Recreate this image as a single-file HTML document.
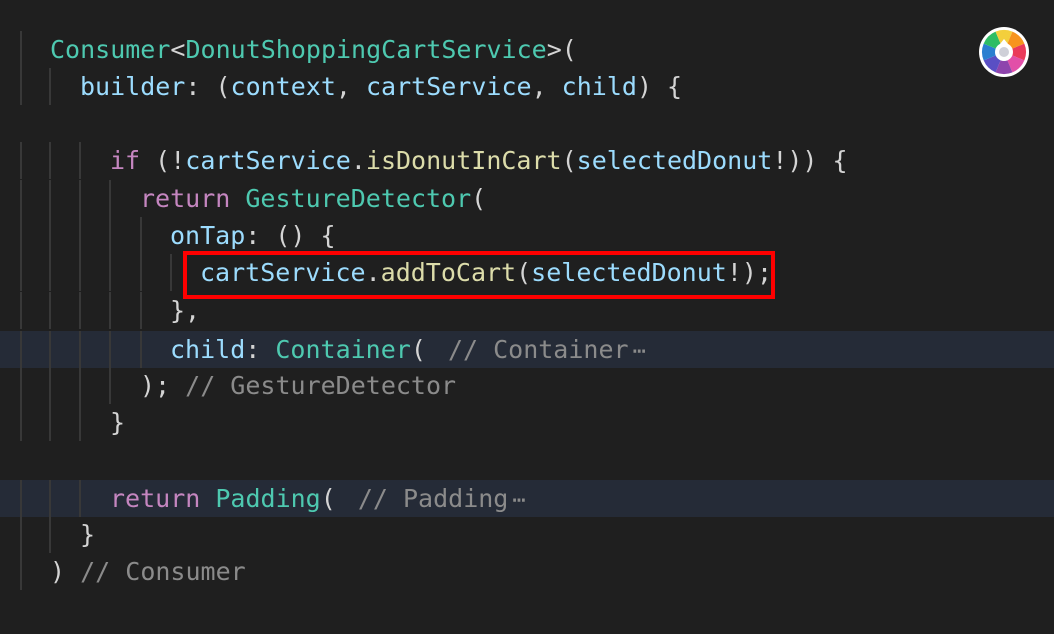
<!DOCTYPE html>
<html><head><meta charset="utf-8"><style>
body{margin:0;width:1054px;height:634px;background:#1f1f1f;overflow:hidden;position:relative;font-family:"DejaVu Sans Mono","Liberation Mono",monospace;font-size:25px;}
.l{position:absolute;left:0;width:1054px;height:37px;line-height:37px;white-space:pre;color:#d4d4d4}
.hl{background:#252b37}
.g{position:absolute;top:0;width:2px;height:37px;background:#383838}
.t{position:absolute;top:0}
.c{color:#4ec9b0}.v{color:#9cdcfe}.k{color:#c586c0}.f{color:#dcdcaa}.m{color:#8b8b8b}
.e{color:#8b8b8b;font-size:22px;margin-left:4px}
</style></head><body>
<div class="l" style="top:31px"><i class="g" style="left:20px"></i><span class="t" style="left:50px"><span class="c">Consumer</span>&lt;<span class="c">DonutShoppingCartService</span>&gt;(</span></div>
<div class="l" style="top:68px"><i class="g" style="left:20px"></i><i class="g" style="left:49px"></i><span class="t" style="left:80px"><span class="v">builder</span>: (<span class="v">context</span>, <span class="v">cartService</span>, <span class="v">child</span>) {</span></div>
<div class="l" style="top:142px"><i class="g" style="left:20px"></i><i class="g" style="left:49px"></i><i class="g" style="left:79px"></i><span class="t" style="left:110px"><span class="k">if</span> (!<span class="v">cartService</span>.<span class="f">isDonutInCart</span>(<span class="v">selectedDonut</span>!)) {</span></div>
<div class="l" style="top:180px"><i class="g" style="left:20px"></i><i class="g" style="left:49px"></i><i class="g" style="left:79px"></i><i class="g" style="left:109px"></i><span class="t" style="left:140px"><span class="k">return</span> <span class="c">GestureDetector</span>(</span></div>
<div class="l" style="top:217px"><i class="g" style="left:20px"></i><i class="g" style="left:49px"></i><i class="g" style="left:79px"></i><i class="g" style="left:109px"></i><i class="g" style="left:140px"></i><span class="t" style="left:170px"><span class="v">onTap</span>: () {</span></div>
<div class="l" style="top:254px"><i class="g" style="left:20px"></i><i class="g" style="left:49px"></i><i class="g" style="left:79px"></i><i class="g" style="left:109px"></i><i class="g" style="left:140px"></i><i class="g" style="left:170px"></i><span class="t" style="left:200px"><span class="v">cartService</span>.<span class="f">addToCart</span>(<span class="v">selectedDonut</span>!);</span></div>
<div class="l" style="top:292px"><i class="g" style="left:20px"></i><i class="g" style="left:49px"></i><i class="g" style="left:79px"></i><i class="g" style="left:109px"></i><i class="g" style="left:140px"></i><span class="t" style="left:170px">},</span></div>
<div class="l hl" style="top:331px"><i class="g" style="left:20px"></i><i class="g" style="left:49px"></i><i class="g" style="left:79px"></i><i class="g" style="left:109px"></i><i class="g" style="left:140px"></i><span class="t" style="left:170px"><span class="v">child</span>: <span class="c">Container</span>( <span class="m" style="margin-left:7px">// Container</span><span class="e">⋯</span></span></div>
<div class="l" style="top:367px"><i class="g" style="left:20px"></i><i class="g" style="left:49px"></i><i class="g" style="left:79px"></i><i class="g" style="left:109px"></i><span class="t" style="left:140px">); <span class="m">// GestureDetector</span></span></div>
<div class="l" style="top:404px"><i class="g" style="left:20px"></i><i class="g" style="left:49px"></i><i class="g" style="left:79px"></i><span class="t" style="left:110px">}</span></div>
<div class="l hl" style="top:480px"><i class="g" style="left:20px"></i><i class="g" style="left:49px"></i><i class="g" style="left:79px"></i><span class="t" style="left:110px"><span class="k">return</span> <span class="c">Padding</span>( <span class="m" style="margin-left:7px">// Padding</span><span class="e">⋯</span></span></div>
<div class="l" style="top:516px"><i class="g" style="left:20px"></i><i class="g" style="left:49px"></i><span class="t" style="left:80px">}</span></div>
<div class="l" style="top:553px"><i class="g" style="left:20px"></i><span class="t" style="left:50px">) <span class="m">// Consumer</span></span></div>
<div style="position:absolute;left:183px;top:251px;width:584px;height:40px;border:4px solid #ff0000"></div>
<svg style="position:absolute;left:978px;top:26px" width="52" height="52" viewBox="-26 -26 52 52">
<circle r="25" fill="#fff"/>
<g transform="rotate(-22.5)">
<path d="M0 0 L22 0 A22 22 0 0 1 15.56 15.56Z" fill="#ea3a5a"/>
<path d="M0 0 L22 0 A22 22 0 0 1 15.56 15.56Z" fill="#e24fa8" transform="rotate(45)"/>
<path d="M0 0 L22 0 A22 22 0 0 1 15.56 15.56Z" fill="#8e44ad" transform="rotate(90)"/>
<path d="M0 0 L22 0 A22 22 0 0 1 15.56 15.56Z" fill="#5a4fc4" transform="rotate(135)"/>
<path d="M0 0 L22 0 A22 22 0 0 1 15.56 15.56Z" fill="#2b7fd0" transform="rotate(180)"/>
<path d="M0 0 L22 0 A22 22 0 0 1 15.56 15.56Z" fill="#2ebd64" transform="rotate(225)"/>
<path d="M0 0 L22 0 A22 22 0 0 1 15.56 15.56Z" fill="#f3cf3c" transform="rotate(270)"/>
<path d="M0 0 L22 0 A22 22 0 0 1 15.56 15.56Z" fill="#f7941d" transform="rotate(315)"/>
</g>
<circle r="9" fill="#fff"/><path d="M-4 -8 L0 -13 L4 -8Z" fill="#fff"/><circle r="5" fill="#cfd0d8"/>
</svg>
</body></html>
